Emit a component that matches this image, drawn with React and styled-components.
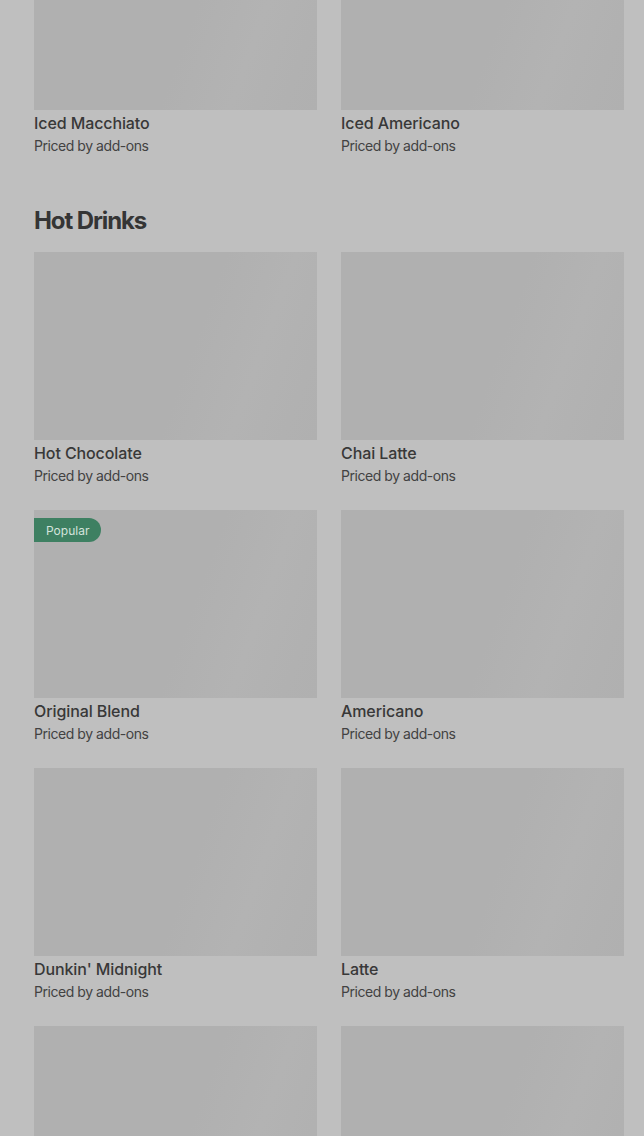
import React from "react";
import styled, { createGlobalStyle } from "styled-components";

const Global = createGlobalStyle`
  html, body { margin: 0; padding: 0; background: #bfbfbf; }
  body { font-family: Inter, "Noto Sans", sans-serif; overflow: hidden; }
`;

const Page = styled.div`
  padding: 0 20px 0 34px;
  margin-top: -78px;
`;

const Grid = styled.div`
  display: grid;
  grid-template-columns: 283px 283px;
  column-gap: 24px;
  row-gap: 24px;
`;

const Card = styled.div`
  display: flex;
  flex-direction: column;
`;

const Thumb = styled.div`
  position: relative;
  height: 188px;
  background: linear-gradient(110deg, #b0b0b0 0%, #b0b0b0 55%, #b3b3b3 75%, #b1b1b1 90%, #b0b0b0 100%);
`;

const Badge = styled.span`
  position: absolute;
  top: 8px;
  left: 0;
  height: 24px;
  padding: 0 12px;
  display: flex;
  align-items: center;
  background: #3e8062;
  color: #d4e3dc;
  font-size: 12px;
  border-radius: 0 12px 12px 0;
`;

const Title = styled.div`
  margin-top: 1px;
  font-size: 16px;
  line-height: 24px;
  font-weight: 500;
  color: #383838;
  letter-spacing: -0.1px;
`;

const Sub = styled.div`
  margin-top: 1px;
  font-size: 14px;
  line-height: 20px;
  color: #424242;
  letter-spacing: -0.45px;
`;

const Heading = styled.h2`
  margin: 49px 0 15px;
  font-size: 24px;
  line-height: 32px;
  font-weight: 700;
  color: #353535;
  letter-spacing: -1.1px;
`;

const Item = ({ name, popular }) => (
  <Card>
    <Thumb>{popular && <Badge>Popular</Badge>}</Thumb>
    <Title>{name}</Title>
    <Sub>Priced by add-ons</Sub>
  </Card>
);

export default function App() {
  return (
    <>
      <Global />
      <Page>
        <Grid>
          <Item name="Iced Macchiato" />
          <Item name="Iced Americano" />
        </Grid>
        <Heading>Hot Drinks</Heading>
        <Grid>
          <Item name="Hot Chocolate" />
          <Item name="Chai Latte" />
          <Item name="Original Blend" popular />
          <Item name="Americano" />
          <Item name="Dunkin' Midnight" />
          <Item name="Latte" />
          <Item name="Hot Tea" />
          <Item name="Cappuccino" />
        </Grid>
      </Page>
    </>
  );
}
